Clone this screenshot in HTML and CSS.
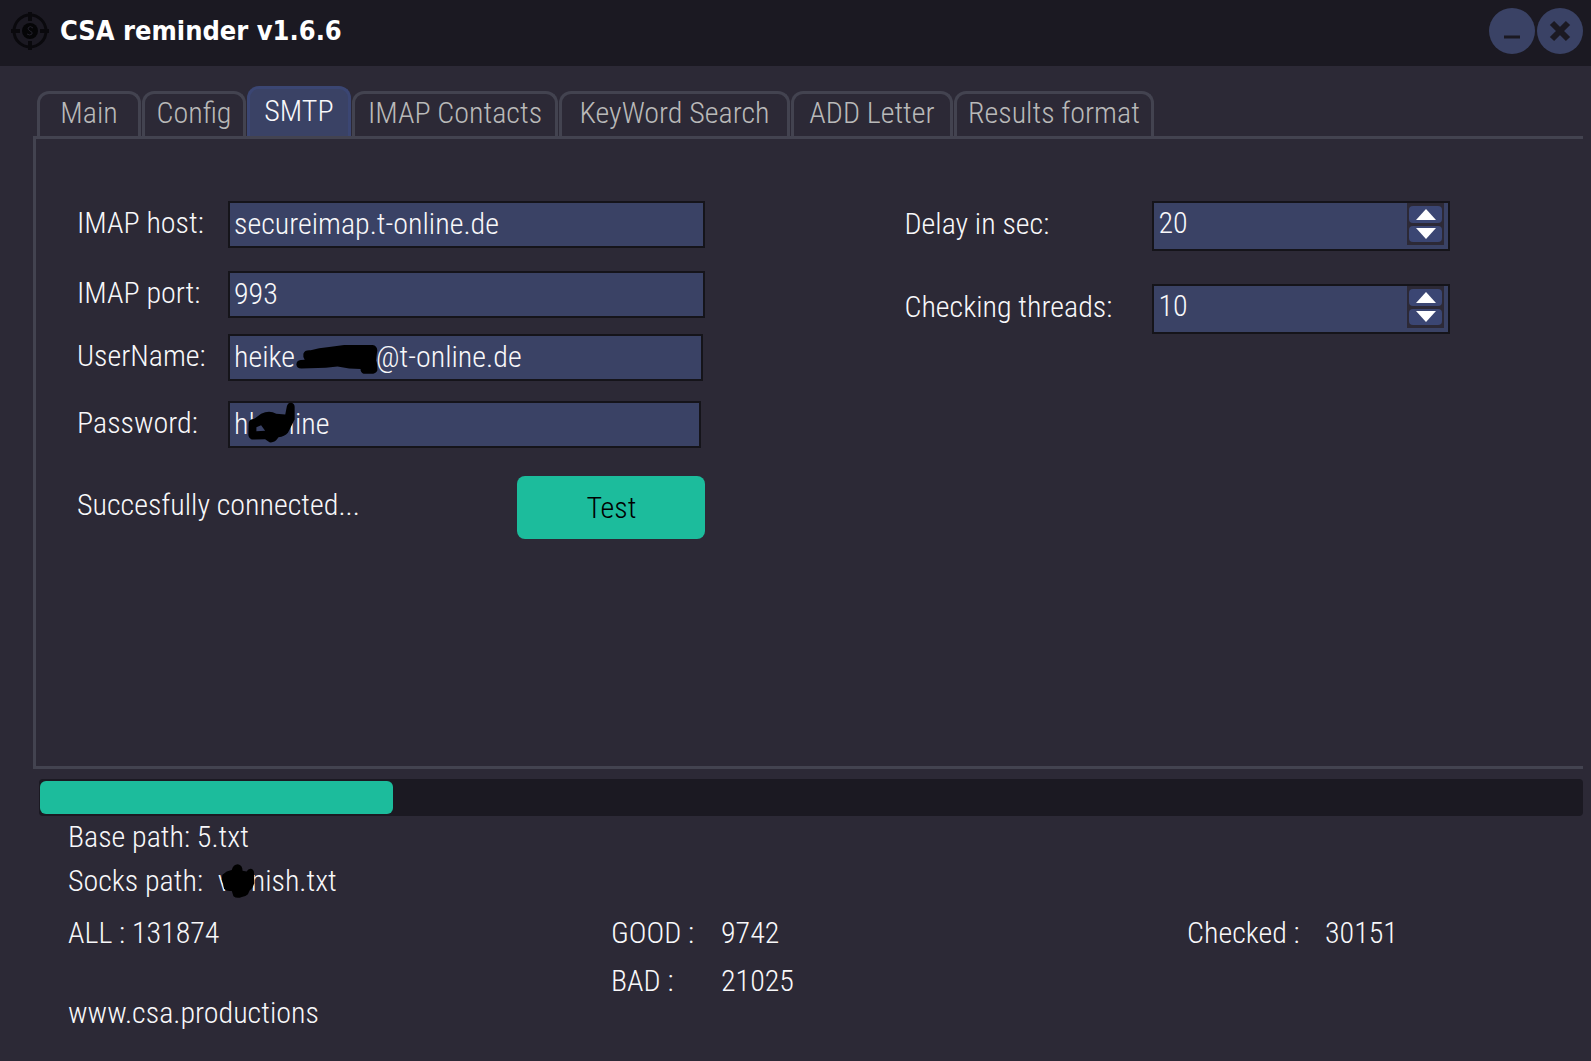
FILE: index.html
```
<!DOCTYPE html>
<html lang="en">
<head>
<meta charset="utf-8">
<title>CSA reminder v1.6.6</title>
<link rel="stylesheet" href="styles.css">
</head>
<body>
<header class="titlebar">
  <svg class="logo" viewBox="0 0 40 40" aria-hidden="true">
    <circle cx="20" cy="20" r="16" fill="none" stroke="#0a090d" stroke-width="3"/>
    <circle cx="20" cy="20" r="8" fill="#050507"/>
    <path d="M20 1v9M20 30v9M1 20h9M30 20h9" stroke="#0a090d" stroke-width="4"/>
    <path d="M23 17q-3-3-5 0q0 2 2 3q3 1 2 3q-2 2-5 0" fill="none" stroke="#22202b" stroke-width="1"/>
  </svg>
  <h1 class="title">CSA reminder v1.6.6</h1>
  <button class="round" type="button" aria-label="Minimize">
    <svg viewBox="0 0 46 46" aria-hidden="true"><path d="M15 29h16" stroke="#1b1922" stroke-width="3"/></svg>
  </button>
  <button class="round" type="button" aria-label="Close">
    <svg viewBox="0 0 46 46" aria-hidden="true"><path d="M15 15l16 16M31 15l-16 16" stroke="#1b1922" stroke-width="6"/></svg>
  </button>
</header>
<main class="content">
  <nav class="tabs">
    <button class="tab" type="button">Main</button>
    <button class="tab" type="button">Config</button>
    <button class="tab active" type="button">SMTP</button>
    <button class="tab contacts" type="button">IMAP Contacts</button>
    <button class="tab keyword" type="button">KeyWord Search</button>
    <button class="tab letter" type="button">ADD Letter</button>
    <button class="tab results" type="button">Results format</button>
  </nav>
  <section class="panel">
    <form class="account">
      <div class="row host">
        <label for="host">IMAP host:</label>
        <div class="field"><input id="host" type="text" value="secureimap.t-online.de"></div>
      </div>
      <div class="row port">
        <label for="port">IMAP port:</label>
        <div class="field"><input id="port" type="text" value="993"></div>
      </div>
      <div class="row user">
        <label for="user">UserName:</label>
        <div class="field">
          <input id="user" type="text" value="heike&nbsp;&nbsp;&nbsp;&nbsp;&nbsp;&nbsp;&nbsp;&nbsp;&nbsp;&nbsp;&nbsp;&nbsp;@t-online.de">
          <svg class="ink ink-user" viewBox="700 455 260 100" aria-hidden="true">
            <path d="M728 490Q732 478 750 480L775 474L805 470L850 464H935Q948 466 949 480L945 510Q950 518 949 540Q945 550 930 550H908Q898 546 899 536L865 534L830 528L795 532L722 534Q708 534 707 522Q708 510 720 509L732 508Q726 500 728 490Z"/>
          </svg>
        </div>
      </div>
      <div class="row pass">
        <label for="pass">Password:</label>
        <div class="field">
          <input id="pass" type="text" value="hl&nbsp;&nbsp;&nbsp;&nbsp;&nbsp;line">
          <svg class="ink ink-pass" viewBox="555 630 155 130" aria-hidden="true">
            <path fill-rule="evenodd" d="M563 695Q565 685 578 684L600 668Q625 656 645 668L672 670L677 645Q680 634 690 635Q701 638 700 650V685Q690 705 680 725Q670 737 652 738Q640 756 625 753L612 744L572 745Q562 740 562 730ZM586 708V720L612 719L600 702Z"/>
          </svg>
        </div>
      </div>
      <div class="actions">
        <output class="status">Succesfully connected...</output>
        <button class="test" type="button">Test</button>
      </div>
    </form>
    <form class="limits">
      <div class="row">
        <label for="delay">Delay in sec:</label>
        <div class="spin">
          <input id="delay" type="text" inputmode="numeric" value="20">
          <div class="steps">
            <button type="button" aria-label="Increase delay"><svg viewBox="0 0 20 11"><path d="M10 0L20 11H0Z"/></svg></button>
            <button type="button" aria-label="Decrease delay"><svg viewBox="0 0 20 11"><path d="M10 11L0 0H20Z"/></svg></button>
          </div>
        </div>
      </div>
      <div class="row">
        <label for="threads">Checking threads:</label>
        <div class="spin">
          <input id="threads" type="text" inputmode="numeric" value="10">
          <div class="steps">
            <button type="button" aria-label="Increase threads"><svg viewBox="0 0 20 11"><path d="M10 0L20 11H0Z"/></svg></button>
            <button type="button" aria-label="Decrease threads"><svg viewBox="0 0 20 11"><path d="M10 11L0 0H20Z"/></svg></button>
          </div>
        </div>
      </div>
    </form>
  </section>
  <progress class="progress" max="131874" value="30151" aria-label="Checked"></progress>
  <footer class="summary">
    <p class="base">Base path: 5.txt</p>
    <p class="socks">Socks path: <span class="masked">v&nbsp;&nbsp;&nbsp;nish.txt<svg class="ink ink-socks" viewBox="605 375 110 110" aria-hidden="true"><path d="M612 410L625 400L640 396Q644 380 658 379Q672 382 672 398L684 400Q690 390 700 393Q708 398 706 410L707 435Q703 450 693 457L688 468Q680 476 670 476Q655 482 645 474L640 458Q625 460 617 452Q615 435 610 425Z"/></svg></span></p>
    <div class="stats">
      <p>ALL : 131874</p>
      <dl class="counts found">
        <dt>GOOD :</dt><dd>9742</dd>
        <dt>BAD :</dt><dd>21025</dd>
      </dl>
      <dl class="counts checked">
        <dt>Checked :</dt><dd>30151</dd>
      </dl>
    </div>
    <a class="site" href="#">www.csa.productions</a>
  </footer>
</main>
</body>
</html>
```
FILE: styles.css
```
* { box-sizing: border-box; }

body {
  margin: 0;
  min-height: 100vh;
  background: #2c2936;
  color: #f8f8fa;
  font: 300 30px/32px "Roboto Condensed", Roboto, "Liberation Sans", sans-serif;
}

button, input {
  font: inherit;
  color: inherit;
  border: 0;
  margin: 0;
  padding: 0;
}

p, dl, dd, h1 { margin: 0; }

/* Title bar */
.titlebar {
  display: flex;
  align-items: center;
  gap: 2px;
  height: 66px;
  padding: 0 8px 4px 10px;
  background: #1b1922;
}

.logo { width: 40px; height: 40px; }

.title {
  flex: 1;
  padding-left: 8px;
  font: bold 27px/32px "DejaVu Sans Condensed", "DejaVu Sans", sans-serif;
  color: #fff;
}

.round {
  width: 46px;
  height: 46px;
  border-radius: 50%;
  background: #3a4265;
}

.round svg { display: block; }

.content { padding: 20px 8px 16px 33px; }

/* Tabs */
.tabs {
  display: flex;
  align-items: flex-end;
  gap: 1px;
  padding-left: 4px;
}

.tab {
  min-width: 104px;
  height: 45px;
  padding: 0 11px 4px;
  border: 3px solid #434350;
  border-bottom: 0;
  border-radius: 12px 12px 0 0;
  background: #2c2936;
  color: #b9b9b9;
  white-space: nowrap;
}

.tab.active {
  height: 50px;
  border-color: #3b4673;
  background: #3a4265;
  color: #f8f8fa;
}

.tab.contacts { min-width: 206px; }
.tab.keyword { min-width: 231px; }
.tab.letter { min-width: 162px; }
.tab.results { min-width: 197px; }

/* Settings panel */
.panel {
  display: grid;
  grid-template-columns: minmax(0, 629fr) minmax(0, 546fr);
  gap: 199px;
  min-height: 633px;
  padding: 62px 133px 0 41px;
  border: 3px solid #434350;
  border-right: 0;
}

.row {
  display: grid;
  grid-template-columns: 151px minmax(0, 1fr);
  align-items: center;
}

.row label {
  padding-bottom: 4px;
  white-space: nowrap;
}

.port { margin-top: 23px; }
.user { margin-top: 16px; padding-right: 2px; }
.pass { margin-top: 20px; padding-right: 4px; }

.field { position: relative; }

.field input {
  display: block;
  width: 100%;
  height: 47px;
  padding: 0 4px 3px;
  border: 2px solid #15141a;
  background: #3a4265;
}

.ink { position: absolute; fill: #000; }
.ink-user { left: 66px; top: 8px; width: 87px; }
.ink-pass { left: 18px; top: 0; width: 52px; }
.ink-socks { left: 2px; top: 0; width: 37px; }

.actions {
  display: flex;
  align-items: center;
  justify-content: space-between;
  margin-top: 28px;
}

.status { padding-bottom: 6px; }

.test {
  width: 188px;
  height: 63px;
  border-radius: 8px;
  background: #1cbc9c;
  color: #000;
}

.limits .row {
  grid-template-columns: 248px minmax(0, 1fr);
  margin-bottom: 33px;
}

.spin {
  display: flex;
  height: 50px;
  padding-right: 4px;
  border: 2px solid #15141a;
  background: #3a4265;
}

.spin input {
  flex: 1;
  min-width: 0;
  padding: 0 4px 6px;
  background: transparent;
}

.steps {
  display: flex;
  flex-direction: column;
  gap: 3px;
  width: 37px;
  height: 42px;
  padding: 3px 2px;
  background: #2c2936;
}

.steps button {
  display: flex;
  flex: 1;
  align-items: center;
  justify-content: center;
  border-radius: 4px;
  background: #3b4673;
}

.steps svg { width: 20px; height: 11px; fill: #fff; }

/* Progress */
.progress {
  display: block;
  appearance: none;
  width: calc(100% - 6px);
  height: 37px;
  margin: 10px 0 0 6px;
  padding: 2px 1px;
  border: 0;
  border-radius: 4px;
  background: #1b1922;
}

.progress::-webkit-progress-bar { background: transparent; }

.progress::-webkit-progress-value {
  border-radius: 6px;
  background: #1cbc9c;
}

/* Summary */
.summary { padding: 5px 0 0 35px; }

.socks { margin-top: 12px; }

.masked {
  position: relative;
  margin-left: 8px;
}

.stats {
  display: grid;
  grid-template-columns: 543fr 576fr 396fr;
  margin-top: 20px;
}

.counts {
  display: grid;
  align-content: start;
  row-gap: 16px;
}

.found { grid-template-columns: 110px 1fr; }
.checked { grid-template-columns: 138px 1fr; }

.site {
  color: inherit;
  text-decoration: none;
}
```
